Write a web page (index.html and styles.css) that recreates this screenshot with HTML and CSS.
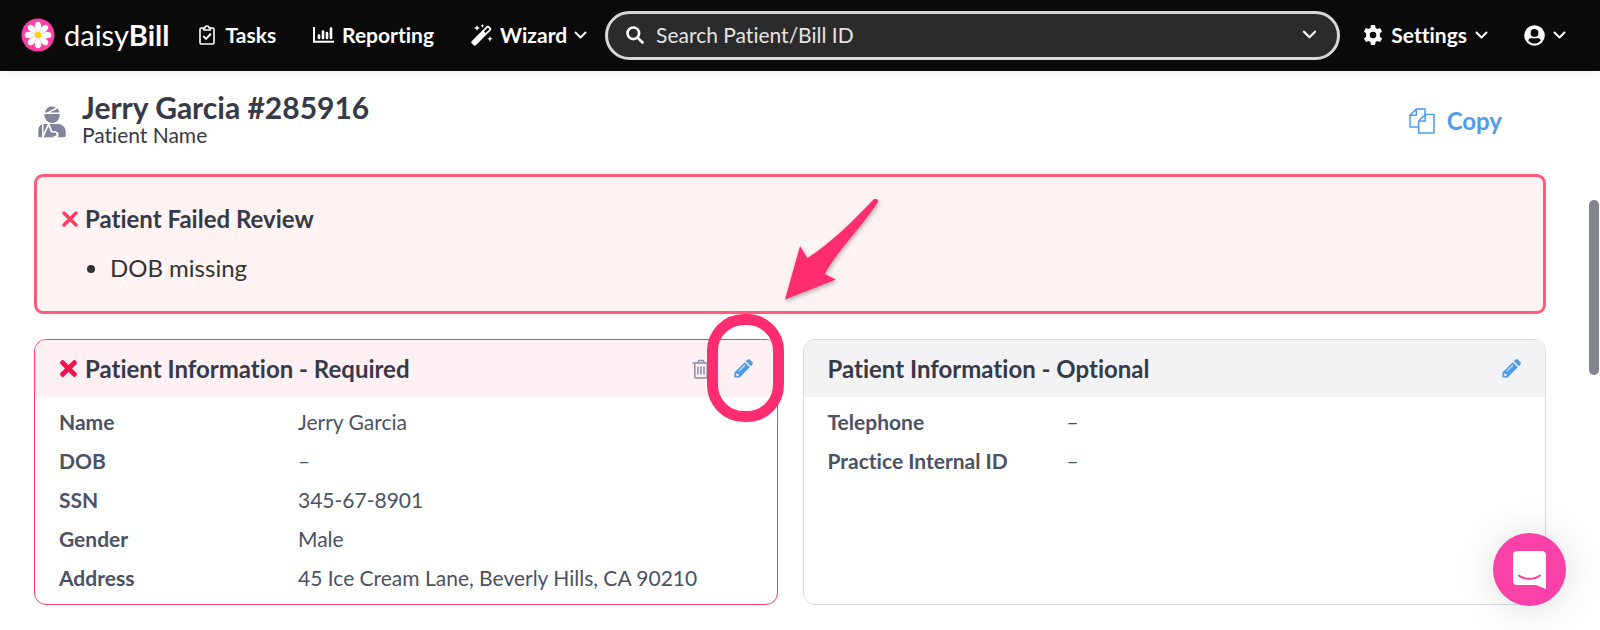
FILE: index.html
```html
<!DOCTYPE html>
<html lang="en">
<head>
    <meta charset="UTF-8">
    <meta name="viewport" content="width=device-width, initial-scale=1.0">
    <title>daisyBill</title>
    <link rel="stylesheet" href="styles.css">
</head>
<body>

    <header class="navbar">
        <a class="logo" href="#">
            <svg width="34" height="34" viewBox="0 0 34 34" aria-hidden="true">
                <circle cx="17" cy="17" r="16.5" fill="#fb3fa5"/>
                <g fill="#fff">
                    <ellipse id="petal" cx="17" cy="8.500" rx="3.200" ry="4.800"/>
                    <use href="#petal" transform="rotate(45 17 17)"/>
                    <use href="#petal" transform="rotate(90 17 17)"/>
                    <use href="#petal" transform="rotate(135 17 17)"/>
                    <use href="#petal" transform="rotate(180 17 17)"/>
                    <use href="#petal" transform="rotate(225 17 17)"/>
                    <use href="#petal" transform="rotate(270 17 17)"/>
                    <use href="#petal" transform="rotate(315 17 17)"/>
                    <circle cx="17" cy="17" r="6.500"/>
                </g>
                <g stroke="#f3cfe6" stroke-width="1">
                    <path id="fold" d="M17 17l3.200-7.400"/>
                    <use href="#fold" transform="rotate(45 17 17)"/>
                    <use href="#fold" transform="rotate(90 17 17)"/>
                    <use href="#fold" transform="rotate(135 17 17)"/>
                    <use href="#fold" transform="rotate(180 17 17)"/>
                    <use href="#fold" transform="rotate(225 17 17)"/>
                    <use href="#fold" transform="rotate(270 17 17)"/>
                    <use href="#fold" transform="rotate(315 17 17)"/>
                </g>
                <circle cx="17" cy="17" r="3.200" fill="#ffd400"/>
            </svg>
            <span class="logo-text">daisy<b>Bill</b></span>
        </a>

        <a class="nav-link tasks" href="#">
            <svg width="16" height="20" viewBox="0 0 16 20" fill="none" stroke="currentColor" stroke-width="1.600" stroke-linecap="round" stroke-linejoin="round" aria-hidden="true">
                <path d="M4.500 3H2.200C1.500 3 1 3.500 1 4.200v13.600c0 .7.5 1.200 1.200 1.200h11.600c.7 0 1.200-.5 1.200-1.200V4.200c0-.7-.5-1.200-1.200-1.200h-2.300"/>
                <path d="M4.500 5V3H6a2 2 0 0 1 4 0h1.500v2z"/>
                <path d="M4.700 11.600l2.400 2.300 4.300-4.600" stroke-width="2"/>
            </svg>
            Tasks
        </a>
        <a class="nav-link reporting" href="#">
            <svg width="21" height="16" viewBox="0 0 21 16" fill="none" stroke="currentColor" aria-hidden="true">
                <path d="M1 0v14.800h20" stroke-width="2"/>
                <path d="M6 11V8.500M10 11V4.500M14 11V6M18 11V1.500" stroke-width="2.600" stroke-linecap="round"/>
            </svg>
            Reporting
        </a>
        <button class="nav-link wizard" type="button">
            <svg width="22" height="22" viewBox="0 0 22 22" aria-hidden="true">
                <path fill="currentColor" fill-rule="evenodd" d="M.7 17.200L15.800 2.100c.6-.6 1.500-.6 2.100 0l2 2c.6.6.6 1.500 0 2.100L4.800 21.300c-.6.6-1.500.6-2.100 0l-2-2c-.6-.6-.6-1.500 0-2.100zM16.800 3.500l-3.900 3.900 1.700 1.700 3.900-3.900z"/>
                <path fill="currentColor" d="M6 1l.8 2L9 4l-2.200.9L6 7l-.9-2.100L3 4l2.100-1zM19 12l.8 1.900 2 .9-2 .8L19 18l-.9-2.400-2-.8 2-.9zM11.500 0l.6 1.300 1.300.6-1.300.6-.6 1.300-.6-1.300-1.300-.6 1.300-.6z"/>
            </svg>
            Wizard
            <svg class="chevron" width="13" height="9" viewBox="0 0 13 9" aria-hidden="true"><path d="M1.500 1.500l5 5 5-5"/></svg>
        </button>

        <form class="search" role="search">
            <svg width="18" height="18" viewBox="0 0 18 18" fill="none" stroke="currentColor" stroke-width="2.600" stroke-linecap="round" aria-hidden="true">
                <circle cx="7.300" cy="7.300" r="5.800"/>
                <path d="M11.800 11.800l4.700 4.700"/>
            </svg>
            <input type="text" placeholder="Search Patient/Bill ID" aria-label="Search Patient/Bill ID">
            <button class="search-toggle" type="button" aria-label="Search options">
                <svg class="chevron" width="15" height="10" viewBox="0 0 13 9" aria-hidden="true"><path d="M1.500 1.500l5 5 5-5"/></svg>
            </button>
        </form>

        <button class="nav-link settings" type="button">
            <svg width="20" height="20" viewBox="0 0 20 20" aria-hidden="true">
                <path fill="currentColor" fill-rule="evenodd" d="M8 0h4l.6 2.900 1.700 1 2.800-1 2 3.500-2.200 1.900v3.400l2.200 1.900-2 3.500-2.800-1-1.700 1L12 20H8l-.6-2.900-1.700-1-2.800 1-2-3.500 2.200-1.900V8.300L.9 6.400l2-3.500 2.800 1 1.700-1zM10 6.700a3.300 3.300 0 1 0 0 6.600 3.300 3.300 0 0 0 0-6.600z"/>
            </svg>
            Settings
            <svg class="chevron" width="13" height="9" viewBox="0 0 13 9" aria-hidden="true"><path d="M1.500 1.500l5 5 5-5"/></svg>
        </button>
        <button class="nav-link account" type="button" aria-label="Account">
            <svg width="21" height="21" viewBox="0 0 21 21" aria-hidden="true">
                <circle cx="10.500" cy="10.500" r="10.300" fill="currentColor"/>
                <circle cx="10.500" cy="7.900" r="3.900" fill="#0a0a0a"/>
                <path d="M4.200 15.400c.7-1.700 2-2.400 3.400-2.400 1 .5 4.800.5 5.800 0 1.400 0 2.700.7 3.400 2.400a8 8 0 0 1-12.600 0z" fill="#0a0a0a"/>
            </svg>
            <svg class="chevron" width="13" height="9" viewBox="0 0 13 9" aria-hidden="true"><path d="M1.500 1.500l5 5 5-5"/></svg>
        </button>
    </header>

    <main class="content">
        <div class="page-header">
            <svg class="patient-icon" width="28" height="32" viewBox="0 0 28 32" fill="currentColor" aria-hidden="true">
                <path d="M7 6.500C7.600 3 10.500.5 14 .5c1.500 0 2.800.4 3.900 1.100L9 6.500zM12 6.500l7.500-4c1 .9 1.600 2.400 1.800 4z"/>
                <path d="M6.500 8h15.200v1.400a7.600 7.600 0 0 1-15.200 0z"/>
                <path d="M4 18.500v12.700H1.500C.8 31.200.3 30.700.3 30v-5.500c0-2.900 1.500-5.200 3.700-6zM5.500 18h4.300l-4.300 9.500z"/>
                <path d="M11.500 18h8.300c4.300 0 7.900 3.300 7.900 7.500V30c0 .7-.6 1.200-1.300 1.200H20c1.600-2.500.2-6-3.200-6.200h-2.500zM10.500 20.500l2.600 6h3.200c2.600 0 2.900 3.500.3 3.500h-1.200l.5 1.200H5.700z"/>
            </svg>
            <div class="page-title">
                <h1>Jerry Garcia #285916</h1>
                <p>Patient Name</p>
            </div>
            <button class="copy-btn" type="button">
                <svg width="26" height="26" viewBox="0 0 26 26" fill="none" stroke="currentColor" stroke-width="1.500" stroke-linejoin="round" aria-hidden="true">
                    <path d="M9.700 19H1V7.300L7.300 1H16v5.500M7.300 1v6.300H1"/>
                    <path d="M16.200 6.500H25V25H9.700V13zM16.200 6.500V13H9.700"/>
                </svg>
                Copy
            </button>
        </div>

        <section class="alert">
            <h2>
                <svg width="16" height="16" viewBox="0 0 16 16" aria-hidden="true"><path d="M2 2l12 12M14 2L2 14" stroke="#ff3b60" stroke-width="3.400" stroke-linecap="round"/></svg>
                Patient Failed Review
            </h2>
            <ul>
                <li>DOB missing</li>
            </ul>
        </section>

        <div class="cards">
            <section class="card card-error">
                <div class="card-header">
                    <svg width="17" height="17" viewBox="0 0 16 16" aria-hidden="true"><path d="M2.500 2.500l11 11M13.500 2.500l-11 11" stroke="#f5124d" stroke-width="4.600" stroke-linecap="round"/></svg>
                    <h2>Patient Information - Required</h2>
                    <button class="icon-btn delete" type="button" aria-label="Delete">
                        <svg width="18" height="20" viewBox="0 0 18 20" fill="none" stroke="currentColor" stroke-width="1.500" stroke-linecap="round" aria-hidden="true">
                            <path d="M1 4h16M2.800 4v13.500c0 .9.600 1.500 1.500 1.500h9.400c.9 0 1.500-.6 1.500-1.500V4M5.500 4l1.300-2.600h4.400L12.500 4M6 8v7M9 8v7M12 8v7"/>
                        </svg>
                    </button>
                    <button class="icon-btn edit" type="button" aria-label="Edit required information">
                        <svg width="19" height="19" viewBox="0 0 19 19" aria-hidden="true">
                            <path fill="currentColor" fill-rule="evenodd" d="M10.800 3.200l5 5L5.600 18.400H.4v-5zM2.300 14.400l-.6 1.400 1.500 1.500 1.400-.7v-1.500H3.200zM10.600 5.700l-6.300 6.200.7.7 6.300-6.200z"/>
                            <path fill="currentColor" d="M11.800 2.200L13.400.700c.8-.8 1.800-.8 2.600 0l2.300 2.300c.8.8.8 1.800 0 2.600l-1.500 1.600z"/>
                        </svg>
                        <span class="highlight"></span>
                    </button>
                </div>
                <dl class="details">
                    <dt>Name</dt><dd>Jerry Garcia</dd>
                    <dt>DOB</dt><dd>–</dd>
                    <dt>SSN</dt><dd>345-67-8901</dd>
                    <dt>Gender</dt><dd>Male</dd>
                    <dt>Address</dt><dd>45 Ice Cream Lane, Beverly Hills, CA 90210</dd>
                </dl>
            </section>

            <section class="card">
                <div class="card-header">
                    <h2>Patient Information - Optional</h2>
                    <button class="icon-btn edit" type="button" aria-label="Edit optional information">
                        <svg width="19" height="19" viewBox="0 0 19 19" aria-hidden="true">
                            <path fill="currentColor" fill-rule="evenodd" d="M10.800 3.200l5 5L5.600 18.400H.4v-5zM2.300 14.400l-.6 1.400 1.500 1.500 1.400-.7v-1.500H3.200zM10.600 5.700l-6.300 6.200.7.7 6.300-6.200z"/>
                            <path fill="currentColor" d="M11.800 2.200L13.400.700c.8-.8 1.800-.8 2.600 0l2.300 2.300c.8.8.8 1.800 0 2.600l-1.500 1.600z"/>
                        </svg>
                    </button>
                </div>
                <dl class="details">
                    <dt>Telephone</dt><dd>–</dd>
                    <dt>Practice Internal ID</dt><dd>–</dd>
                </dl>
            </section>
        </div>
    </main>

    <svg class="arrow" width="100" height="108" viewBox="0 0 100 108" aria-hidden="true">
        <path fill="#ff2d6f" d="M4 104.500L19 51l7.500 12C50 48 72 26 92.500 4.500c2-2 5.300 0 4.300 2.800C80 33 57 55 43.500 79L55 84.500z"/>
    </svg>

    <div class="scroll-thumb"></div>

    <button class="chat-btn" type="button" aria-label="Open chat">
        <svg width="33" height="38" viewBox="0 0 33 38" aria-hidden="true">
            <path fill="#fff" d="M4 0h25c2.200 0 4 1.600 4 3.800V38l-10-4H4c-2.400 0-4-1.600-4-4V3.800C0 1.600 1.800 0 4 0z"/>
            <path d="M5.800 24.500c5.500 4.400 15.700 4.400 21.200 0" fill="none" stroke="#f941a7" stroke-width="2" stroke-linecap="round"/>
        </svg>
    </button>

</body>
</html>
```

FILE: styles.css
```css
* {
    box-sizing: border-box;
    margin: 0;
    padding: 0;
}

body {
    background: #fff;
    color: #363a48;
    font-family: Lato, "Liberation Sans", sans-serif;
    font-size: 21px;
    font-variant-ligatures: none;
    line-height: 24px;
    overflow: hidden;
}

button {
    background: none;
    border: none;
    color: inherit;
    cursor: pointer;
    font: inherit;
}

svg {
    display: block;
    flex: none;
}

/* top navigation */
.navbar {
    align-items: center;
    background: #0a0a0a;
    box-shadow: 0 1px 10px rgba(0, 0, 0, 0.08);
    color: #fff;
    display: flex;
    height: 71px;
    padding: 0 34px 1px 21px;
}

.logo {
    align-items: center;
    color: #fff;
    display: flex;
    gap: 9px;
    text-decoration: none;
}

.logo-text {
    font-size: 29px;
    font-weight: 400;
    line-height: 36px;
}

.logo-text b {
    font-weight: 700;
}

.nav-link {
    align-items: center;
    color: #fff;
    display: flex;
    font-size: 21px;
    font-weight: 700;
    gap: 8px;
    text-decoration: none;
    white-space: nowrap;
}

.tasks {
    gap: 10px;
    margin-left: 30px;
}

.reporting {
    margin-left: 37px;
}

.wizard {
    gap: 7px;
    margin-left: 37px;
}

.chevron {
    fill: none;
    stroke: currentColor;
    stroke-linecap: round;
    stroke-linejoin: round;
    stroke-width: 2;
}

.search {
    align-items: center;
    background: #2b2b2b;
    border: 3px solid #d8d6d6;
    border-radius: 25px;
    display: flex;
    flex: 1;
    height: 49px;
    margin-left: 18px;
    padding: 0 20px 0 18px;
}

.search input {
    background: none;
    border: none;
    color: #fff;
    flex: 1;
    font: inherit;
    margin-left: 12px;
    min-width: 0;
    outline: none;
}

.search input::placeholder {
    color: #e4e4e4;
    opacity: 1;
}

.settings {
    margin-left: 23px;
}

.account {
    margin-left: 36px;
}

/* page */
.content {
    padding: 20px 54px 24px 34px;
}

.page-header {
    align-items: center;
    display: flex;
    margin-bottom: 27px;
    padding: 0 44px 0 4px;
}

.patient-icon {
    color: #80859b;
    margin-top: 6px;
}

.page-title {
    flex: 1;
    margin-left: 16px;
}

.page-title h1 {
    font-size: 30px;
    font-weight: 700;
    line-height: 32px;
}

.copy-btn {
    align-items: center;
    color: #4f9be9;
    display: flex;
    font-size: 24px;
    font-weight: 700;
    gap: 12px;
    margin-top: 4px;
}

.alert {
    background: #fff4f3;
    border: 3px solid #ff5c7a;
    border-radius: 9px;
    margin-bottom: 25px;
    padding: 26px 25px 28px;
}

.alert h2 {
    align-items: center;
    display: flex;
    font-size: 24px;
    gap: 7px;
    line-height: 32px;
    margin-bottom: 18px;
}

.alert ul {
    color: #333;
    font-size: 24px;
    line-height: 30px;
    padding-left: 48px;
}

.cards {
    display: grid;
    gap: 25px;
    grid-template-columns: 1fr 1fr;
}

.card {
    border: 1px solid #d9dbe3;
    border-radius: 12px;
}

.card-error {
    border-color: #f93f69;
}

.card-header {
    align-items: center;
    background: #f3f3f6;
    border-radius: 11px 11px 0 0;
    display: flex;
    height: 57px;
    padding: 0 24px;
}

.card-error .card-header {
    background: #fff0f3;
    padding-left: 25px;
}

.card-header h2 {
    flex: 1;
    font-size: 24px;
    line-height: 32px;
}

.card-header svg + h2 {
    margin-left: 8px;
}

.icon-btn {
    position: relative;
}

.delete {
    color: #878ca2;
    margin-right: 24px;
}

.edit {
    color: #4f9be9;
}

.details {
    color: #4c5163;
    display: grid;
    grid-template-columns: 239px 1fr;
    line-height: 39px;
    padding: 5px 24px 7px;
}

.details dt {
    font-weight: 700;
}

/* marks drawn over the page */
.highlight {
    border: 11px solid #ff2d6f;
    border-radius: 37px;
    height: 108px;
    left: -27px;
    position: absolute;
    top: -45px;
    width: 77px;
}

.arrow {
    filter: drop-shadow(1px 2px 2px rgba(0, 0, 0, 0.3));
    left: 781px;
    position: absolute;
    top: 195px;
}

.scroll-thumb {
    background: #828590;
    border-radius: 5px;
    height: 175px;
    position: fixed;
    right: 1px;
    top: 200px;
    width: 10px;
}

.chat-btn {
    align-items: center;
    background: #f941a7;
    border-radius: 50%;
    bottom: 24px;
    box-shadow: 0 2px 40px rgba(0, 0, 0, 0.14);
    display: flex;
    height: 73px;
    justify-content: center;
    position: fixed;
    right: 34px;
    width: 73px;
}
```
